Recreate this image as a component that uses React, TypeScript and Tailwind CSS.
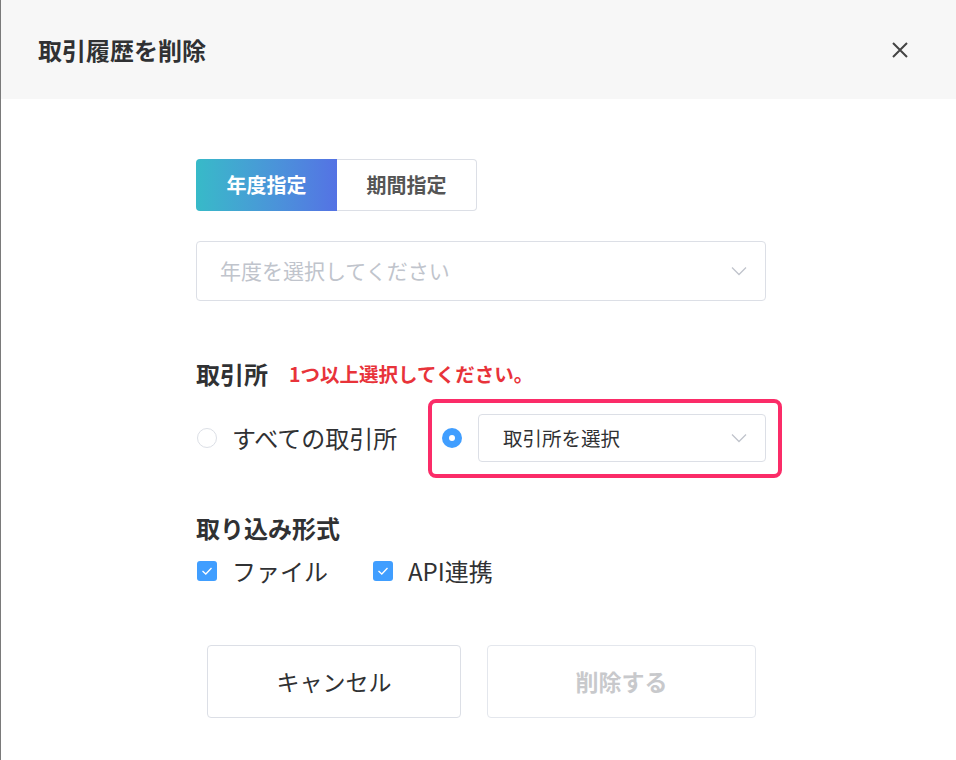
import React from "react";

const font = { fontFamily: '"Noto Sans CJK JP", "Noto Sans", sans-serif' };

function Chevron() {
  return (
    <svg width="16" height="10" viewBox="0 0 16 10" fill="none">
      <path d="M1 1.5 L8 8.5 L15 1.5" stroke="#c0c4cc" strokeWidth="1.3" />
    </svg>
  );
}

function Check() {
  return (
    <div className="w-[20px] h-[20px] rounded-[3px] bg-[#409eff] flex items-center justify-center">
      <svg width="12" height="10" viewBox="0 0 12 10" fill="none">
        <path d="M1.5 5 L4.8 8 L10.5 2" stroke="#ffffff" strokeWidth="1.3" />
      </svg>
    </div>
  );
}

export default function App() {
  return (
    <div
      className="w-[956px] h-[760px] bg-white border-l border-[#7a7a7a] flex flex-col text-[#303133]"
      style={font}
    >
      <div className="h-[99px] bg-[#f7f7f7] flex items-center justify-between pl-[37px] pr-[47px] shrink-0">
        <div className="text-[24px] font-bold text-[#303133]">取引履歴を削除</div>
        <svg width="18" height="18" viewBox="0 0 18 18" fill="none">
          <path d="M2 2 L16 16 M16 2 L2 16" stroke="#444" strokeWidth="2" />
        </svg>
      </div>

      <div className="pl-[195px] flex flex-col">
        <div className="mt-[60px] flex h-[52px]">
          <div className="w-[141px] h-full rounded-l-[4px] bg-gradient-to-r from-[#37bac8] to-[#5472e4] flex items-center justify-center text-white font-bold text-[20px]">
            年度指定
          </div>
          <div className="w-[140px] h-full rounded-r-[4px] border border-l-0 border-[#dcdfe6] flex items-center justify-center text-[#555] font-bold text-[20px]">
            期間指定
          </div>
        </div>

        <div className="mt-[30px] w-[570px] h-[60px] border border-[#dcdfe6] rounded-[4px] flex items-center justify-between pl-[23px] pr-[18px]">
          <span className="text-[21px] text-[#c0c4cc]">年度を選択してください</span>
          <Chevron />
        </div>

        <div className="mt-[58px] h-[30px] flex items-center">
          <span className="text-[24px] font-bold text-[#303133]">取引所</span>
          <span className="ml-[21px] text-[19.5px] font-bold text-[#e8333a]">1つ以上選択してください。</span>
        </div>

        <div className="relative mt-[25px] h-[48px] flex items-center">
          <div className="w-[246px] flex items-center">
            <div className="ml-[1px] w-[20px] h-[20px] rounded-full border border-[#dcdfe6] bg-white" />
            <span className="ml-[15px] text-[24px] text-[#303133]">すべての取引所</span>
          </div>
          <div className="w-[20px] h-[20px] rounded-full bg-[#409eff] flex items-center justify-center">
            <div className="w-[6px] h-[6px] rounded-full bg-white" />
          </div>
          <div className="ml-[16px] w-[288px] h-[48px] border border-[#dcdfe6] rounded-[4px] flex items-center justify-between pl-[24px] pr-[18px]">
            <span className="text-[19.5px] text-[#303133]">取引所を選択</span>
            <Chevron />
          </div>
          <div className="absolute left-[232px] top-[-15px] w-[354px] h-[79px] border-[4px] border-[#fb2c68] rounded-[8px] pointer-events-none" />
        </div>

        <div className="mt-[51px] h-[30px] flex items-center">
          <span className="text-[24px] font-bold text-[#303133]">取り込み形式</span>
        </div>

        <div className="mt-[13px] h-[30px] flex items-center">
          <div className="w-[177px] flex items-center">
            <div className="ml-[1px]"><Check /></div>
            <span className="ml-[15px] text-[24px] text-[#303133]">ファイル</span>
          </div>
          <Check />
          <span className="ml-[15px] text-[24px] text-[#303133]">API連携</span>
        </div>

        <div className="mt-[59px] flex gap-[26px] ml-[11px]">
          <div className="w-[254px] h-[73px] border border-[#dcdfe6] rounded-[4px] flex items-center justify-center text-[23px] text-[#303133]">
            キャンセル
          </div>
          <div className="w-[269px] h-[73px] border border-[#e4e7ed] rounded-[4px] flex items-center justify-center text-[23px] font-bold text-[#c8c9cc]">
            削除する
          </div>
        </div>
      </div>
    </div>
  );
}
